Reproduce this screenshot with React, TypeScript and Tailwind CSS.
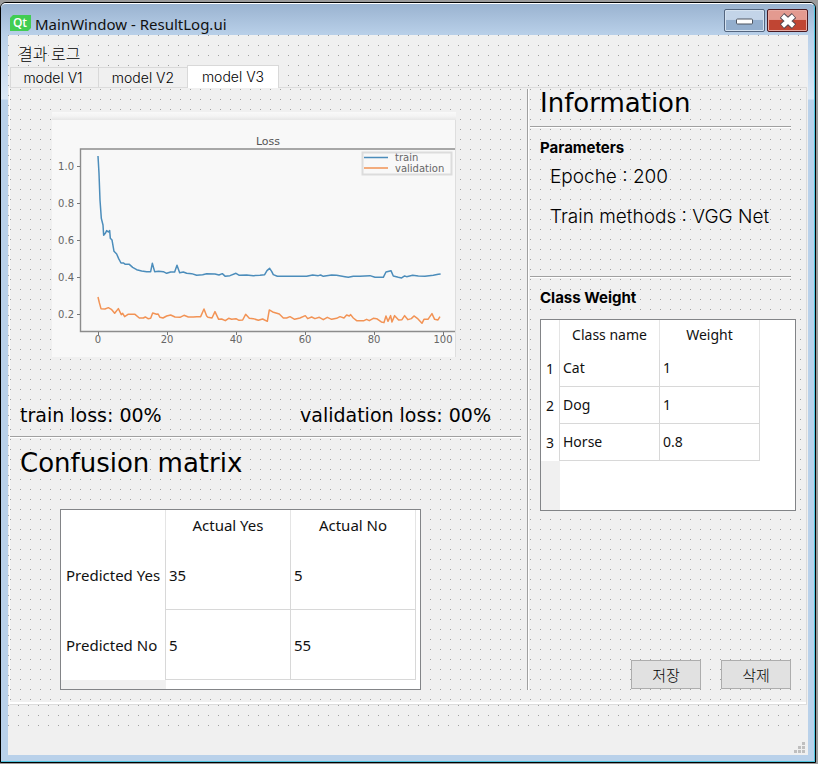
import { useState } from "react";

const TABS = ["model V1", "model V2", "model V3"];

const TRAIN =
  "174,138 177,190 180,270 184,325 189,345 191,376 196,370 200,362 205,366 209,362 211,385 216,390 222,424 230,432 236,446 243,459 250,459 256,463 268,463 278,472 290,479 305,483 320,485 332,485 337,460 344,485 356,484 370,485 380,490 392,486 404,486 411,466 419,488 430,486 440,490 455,491 470,496 488,494 500,491 525,492 537,495 547,491 556,499 570,497 588,490 598,496 620,495 640,497 660,496 674,494 681,482 689,475 695,484 700,494 712,499 740,499 780,499 800,499 818,495 835,497 842,495 850,499 875,495 890,496 915,500 925,502 940,499 960,499 990,497 1005,502 1030,502 1038,486 1053,482 1060,498 1075,502 1085,504 1094,498 1100,500 1118,496 1135,498 1155,499 1180,496 1195,493 1202,492";

const VALIDATION =
  "174,561 178,578 183,596 195,597 205,593 214,598 224,610 235,596 244,614 248,610 254,620 264,613 285,613 298,624 310,624 316,621 324,626 332,625 338,609 350,613 354,612 360,622 369,624 380,618 392,615 405,621 420,622 432,616 445,621 460,621 470,620 482,620 492,597 500,618 504,622 516,624 525,605 536,628 545,627 556,632 566,625 575,628 588,626 597,631 608,630 617,613 628,625 640,626 655,631 668,627 682,634 688,600 698,606 718,612 730,624 740,624 750,620 764,628 780,624 796,617 803,626 815,621 825,626 838,622 850,629 862,622 875,628 890,625 900,620 912,624 920,615 928,618 932,614 940,624 950,632 972,632 980,628 988,632 1000,625 1010,626 1024,636 1032,638 1038,618 1044,634 1052,617 1056,636 1064,617 1076,630 1086,629 1094,617 1104,629 1114,626 1122,618 1132,625 1146,640 1152,628 1164,628 1176,611 1184,628 1194,630 1200,620";

function LossChart() {
  const yTicks: [string, number][] = [["1.0", 54], ["0.8", 91], ["0.6", 128], ["0.4", 165], ["0.2", 202]];
  const xTicks: [string, number][] = [["0", 46], ["20", 115], ["40", 184], ["60", 253], ["80", 322], ["100", 391]];
  return (
    <svg
      className="block h-[245px] w-[404px] font-['DejaVu_Sans',sans-serif]"
      viewBox="0 0 404 245"
      role="img"
      aria-label="Loss"
    >
      <defs>
        <linearGradient id="strip" x1="0" y1="0" x2="0" y2="1">
          <stop offset="0" stopColor="#f9f9f9" />
          <stop offset="0.5" stopColor="#f4f4f4" />
          <stop offset="1" stopColor="#e6e6e6" />
        </linearGradient>
      </defs>
      <rect width="404" height="245" fill="#f8f8f8" />
      <rect width="404" height="8" fill="url(#strip)" />
      <path d="M403.5 8V245" stroke="#dedede" />
      <path d="M403 37H28.500V219.500H403" fill="none" stroke="#8c8c8c" strokeWidth="1.400" />
      {yTicks.map(([label, y]) => (
        <g key={label}>
          <path d={`M25 ${y}.5H28`} stroke="#777" />
          <text x="22" y={y + 4} textAnchor="end" fontSize="10" fill="#666">{label}</text>
        </g>
      ))}
      {xTicks.map(([label, x]) => (
        <g key={label}>
          <path d={`M${x}.5 220V223`} stroke="#777" />
          <text x={x} y="231" textAnchor="middle" fontSize="10" fill="#666">{label}</text>
        </g>
      ))}
      <text x="216" y="33" textAnchor="middle" fontSize="11" fill="#555">Loss</text>
      <g transform="translate(-12 -2) scale(0.3333)" fill="none" strokeLinejoin="round">
        <polyline points={TRAIN} stroke="#4c8dbb" strokeWidth="4.500" />
        <polyline points={VALIDATION} stroke="#f29355" strokeWidth="4.500" />
      </g>
      <rect x="310.5" y="40.5" width="89" height="22" fill="#f8f8f8" stroke="#dcdcdc" strokeWidth="2" />
      <path d="M312 45.500H336" stroke="#4c8dbb" strokeWidth="1.500" />
      <path d="M312 56H336" stroke="#f29355" strokeWidth="1.500" />
      <text x="343" y="49" fontSize="10" fill="#666">train</text>
      <text x="343" y="60" fontSize="10" fill="#666">validation</text>
    </svg>
  );
}

function Rule() {
  return <hr className="h-[2px] border-0 border-t border-b border-t-[#a0a0a0] border-b-white" />;
}

function TitleBar() {
  return (
    <header className="flex h-[31px] items-start pl-[9px]">
      <svg className="mt-[11px] h-[16px] w-[21px] shrink-0" viewBox="0 0 21 16" aria-hidden="true">
        <path d="M3 0H21V13L18 16H0V3Z" fill="#41cd52" />
        <text x="10" y="12" textAnchor="middle" fontSize="12" fill="#fff" className="font-['Open_Sans',sans-serif] font-semibold">
          Qt
        </text>
      </svg>
      <h1 className="mt-[10px] ml-[4px] flex-1 font-['Noto_Sans',sans-serif] text-[15px] leading-[20px] whitespace-nowrap text-[#111]">
        MainWindow - ResultLog.ui
      </h1>
      <div className="mt-[5px] flex gap-[2px]">
        <button
          type="button"
          aria-label="Minimize"
          className="flex h-[23px] w-[41px] items-center justify-center rounded-[2px] border border-[#53657f] bg-linear-to-b from-[#c3d4e8] from-45% to-[#93aecd] to-50% inset-ring inset-ring-[#d5e2f0]"
        >
          <svg width="18" height="8" viewBox="0 0 18 8" aria-hidden="true">
            <rect x="0.5" y="2" width="16" height="5" rx="1" fill="#fff" stroke="#4d5561" />
          </svg>
        </button>
        <button
          type="button"
          aria-label="Close"
          className="flex h-[23px] w-[41px] items-center justify-center rounded-[2px] border border-[#4a1820] bg-linear-to-b from-[#e39a90] from-45% to-[#c04533] to-50% inset-ring inset-ring-[#e8aaa2]"
        >
          <svg width="18" height="16" viewBox="0 0 18 16" aria-hidden="true">
            <path d="M3 2.500L15 13.500M15 2.500L3 13.500" stroke="#554a52" strokeWidth="6.500" />
            <path d="M3.500 3L14.500 13M14.500 3L3.500 13" stroke="#fff" strokeWidth="4.500" />
          </svg>
        </button>
      </div>
    </header>
  );
}

function Tabs() {
  const [active, setActive] = useState(2);
  return (
    <div role="tablist" className="ml-[2px] flex h-[22px] items-end font-['Inter',sans-serif] text-[14px] leading-[20px]">
      {TABS.map((tab, i) => (
        <button
          key={tab}
          type="button"
          role="tab"
          aria-selected={i === active}
          onClick={() => setActive(i)}
          className={
            i === active
              ? "z-10 -mb-px h-[23px] w-[92px] border border-b-0 border-[#d9d9d9] bg-white font-light"
              : "h-[20px] w-[89px] border border-r-0 border-b-0 border-[#d9d9d9] bg-[#f0f0f0] font-light first:w-[88px] first:pr-[3px]"
          }
        >
          {tab}
        </button>
      ))}
    </div>
  );
}

function ConfusionTable() {
  const rows = [
    ["Predicted Yes", "35", "5"],
    ["Predicted No", "5", "55"],
  ];
  return (
    <div className="flex h-[181px] w-[361px] flex-col border border-[#828487] bg-white font-['Noto_Sans',sans-serif] text-[15px] leading-[20px] text-[#111]">
      <table className="w-[355px] table-fixed border-separate border-spacing-0">
        <thead>
          <tr className="h-[30px]">
            <td className="w-[105px] border-r border-[#e5e5e5]" />
            <th scope="col" className="border-r border-[#e5e5e5] p-0 text-center font-normal">Actual Yes</th>
            <th scope="col" className="border-r border-[#e5e5e5] p-0 text-center font-normal">Actual No</th>
          </tr>
        </thead>
        <tbody>
          {rows.map(([name, ...cells]) => (
            <tr key={name} className="h-[70px]">
              <th scope="row" className="border-r border-[#d8d8d8] p-0 pl-[5px] text-left font-normal whitespace-nowrap">{name}</th>
              {cells.map((c, i) => (
                <td key={i} className="border-r border-b border-[#d8d8d8] p-0 pl-[3px]">{c}</td>
              ))}
            </tr>
          ))}
        </tbody>
      </table>
      <div className="w-[105px] flex-1 bg-[#f0f0f0]" />
    </div>
  );
}

function WeightTable() {
  const rows = [
    ["1", "Cat", "1"],
    ["2", "Dog", "1"],
    ["3", "Horse", "0.8"],
  ];
  return (
    <div className="flex h-[192px] w-[256px] flex-col border border-[#828487] bg-white font-['Noto_Sans',sans-serif] text-[14px] leading-[20px] text-[#111]">
      <table className="w-[219px] table-fixed border-separate border-spacing-0">
        <thead>
          <tr className="h-[30px]">
            <td className="w-[19px] border-r border-[#e5e5e5]" />
            <th scope="col" className="border-r border-[#e5e5e5] p-0 text-center font-normal">Class name</th>
            <th scope="col" className="border-r border-[#e5e5e5] p-0 text-center font-normal">Weight</th>
          </tr>
        </thead>
        <tbody>
          {rows.map(([n, name, weight]) => (
            <tr key={n} className="h-[37px]">
              <th scope="row" className="border-r border-[#d8d8d8] p-0 text-center font-normal">{n}</th>
              <td className="border-r border-b border-[#d8d8d8] p-0 pl-[3px]">{name}</td>
              <td className="border-r border-b border-[#d8d8d8] p-0 pl-[3px]">{weight}</td>
            </tr>
          ))}
        </tbody>
      </table>
      <div className="w-[19px] flex-1 bg-[#f0f0f0]" />
    </div>
  );
}

function Results() {
  return (
    <section className="min-w-0 flex-1">
      <div className="pt-[24px] pl-[42px]">
        <LossChart />
      </div>
      <div className="mt-[43px] mb-[6px] grid h-[30px] grid-cols-[280px_auto] items-center pl-[10px] font-['DejaVu_Sans',sans-serif] text-[19px] leading-[30px] whitespace-nowrap">
        <p>train loss: 00%</p>
        <p>validation loss: 00%</p>
      </div>
      <div className="mr-[6px]">
        <Rule />
      </div>
      <h2 className="pl-[10px] font-['DejaVu_Sans',sans-serif] text-[26px] leading-[50px]">Confusion matrix</h2>
      <div className="mt-[21px] pl-[50px]">
        <ConfusionTable />
      </div>
    </section>
  );
}

function Information() {
  const button =
    "h-[29px] w-[70px] border border-[#adadad] bg-[#e1e1e1] font-['Noto_Sans_CJK_KR',sans-serif] text-[15px] leading-[20px] font-light";
  return (
    <section className="ml-px flex w-[276px] shrink-0 flex-col font-['Inter',sans-serif]">
      <h2 className="pl-[10px] font-['DejaVu_Sans',sans-serif] text-[26px] leading-[30px]">Information</h2>
      <div className="mt-[8px] mr-[15px]">
        <Rule />
      </div>
      <h3 className="mt-[10px] pl-[10px] text-[15px] leading-[20px] font-bold">Parameters</h3>
      <div className="mt-[4px] mb-[44px] flex flex-col gap-[10px] pl-[20px] text-[19px] leading-[30px] font-light whitespace-nowrap">
        <p>Epoche : 200</p>
        <p>Train methods : VGG Net</p>
      </div>
      <div className="mr-[15px]">
        <Rule />
      </div>
      <h3 className="mt-[10px] mb-[11px] pl-[10px] text-[15px] leading-[20px] font-bold">Class Weight</h3>
      <div className="pl-[10px]">
        <WeightTable />
      </div>
      <div className="mt-auto flex justify-end gap-[20px] pr-[15px] pb-px">
        <button type="button" className={button}>저장</button>
        <button type="button" className={button}>삭제</button>
      </div>
    </section>
  );
}

export default function App() {
  return (
    <div className="min-h-screen bg-[#9b9b9b] pt-[2px] pr-[2px] pb-px text-black">
      <div className="flex min-h-[761px] flex-col rounded-t-[6px] border border-black bg-[#b9d1ea]">
        <div className="flex flex-1 flex-col overflow-hidden rounded-t-[5px] border-t border-r border-b border-t-white border-r-[#4fc3de] border-b-[#4fc3de] bg-[linear-gradient(#9ab3d0_0px,#b9d0e9_31px,#dbe8f6_95px,#b9d1ea_96px)] pr-[6px] pb-[6px] pl-[7px]">
          <div className="-mr-[6px] -ml-[7px] pr-[6px]">
            <TitleBar />
          </div>
          <main className="flex flex-1 flex-col bg-[#f0f0f0] bg-[conic-gradient(at_1px_1px,transparent_75%,#a0a0a0_0)] bg-size-[10px_10px]">
            <p className="mt-[7px] mb-px pl-[10px] font-['Noto_Sans_CJK_KR',sans-serif] text-[16px] leading-[22px] font-light">
              결과 로그
            </p>
            <Tabs />
            <div
              role="tabpanel"
              className="mr-px ml-px border-t border-r border-b border-l border-t-[#dcdcdc] border-r-[#dcdcdc] border-b-[#dcdcdc] border-l-white"
            >
              <div className="flex border-b-2 border-white bg-[#f0f0f0] bg-[conic-gradient(at_1px_1px,transparent_75%,#a0a0a0_0)] bg-size-[10px_10px] bg-position-[0px_1px] pb-[12px]">
                <Results />
                <div className="mt-px w-[2px] shrink-0 border-r border-l border-r-white border-l-[#a0a0a0]" />
                <Information />
              </div>
            </div>
            <footer className="mt-auto flex h-[22px] items-end justify-end bg-[#f0f0f0] pr-[3px] pb-[2px]">
              <svg width="11" height="11" viewBox="0 0 11 11" fill="#bfbfbf" aria-hidden="true">
                <path d="M8 0h3v3h-3zM4 4h3v3h-3zM8 4h3v3h-3zM0 8h3v3h-3zM4 8h3v3h-3zM8 8h3v3h-3z" />
              </svg>
            </footer>
          </main>
        </div>
      </div>
    </div>
  );
}
